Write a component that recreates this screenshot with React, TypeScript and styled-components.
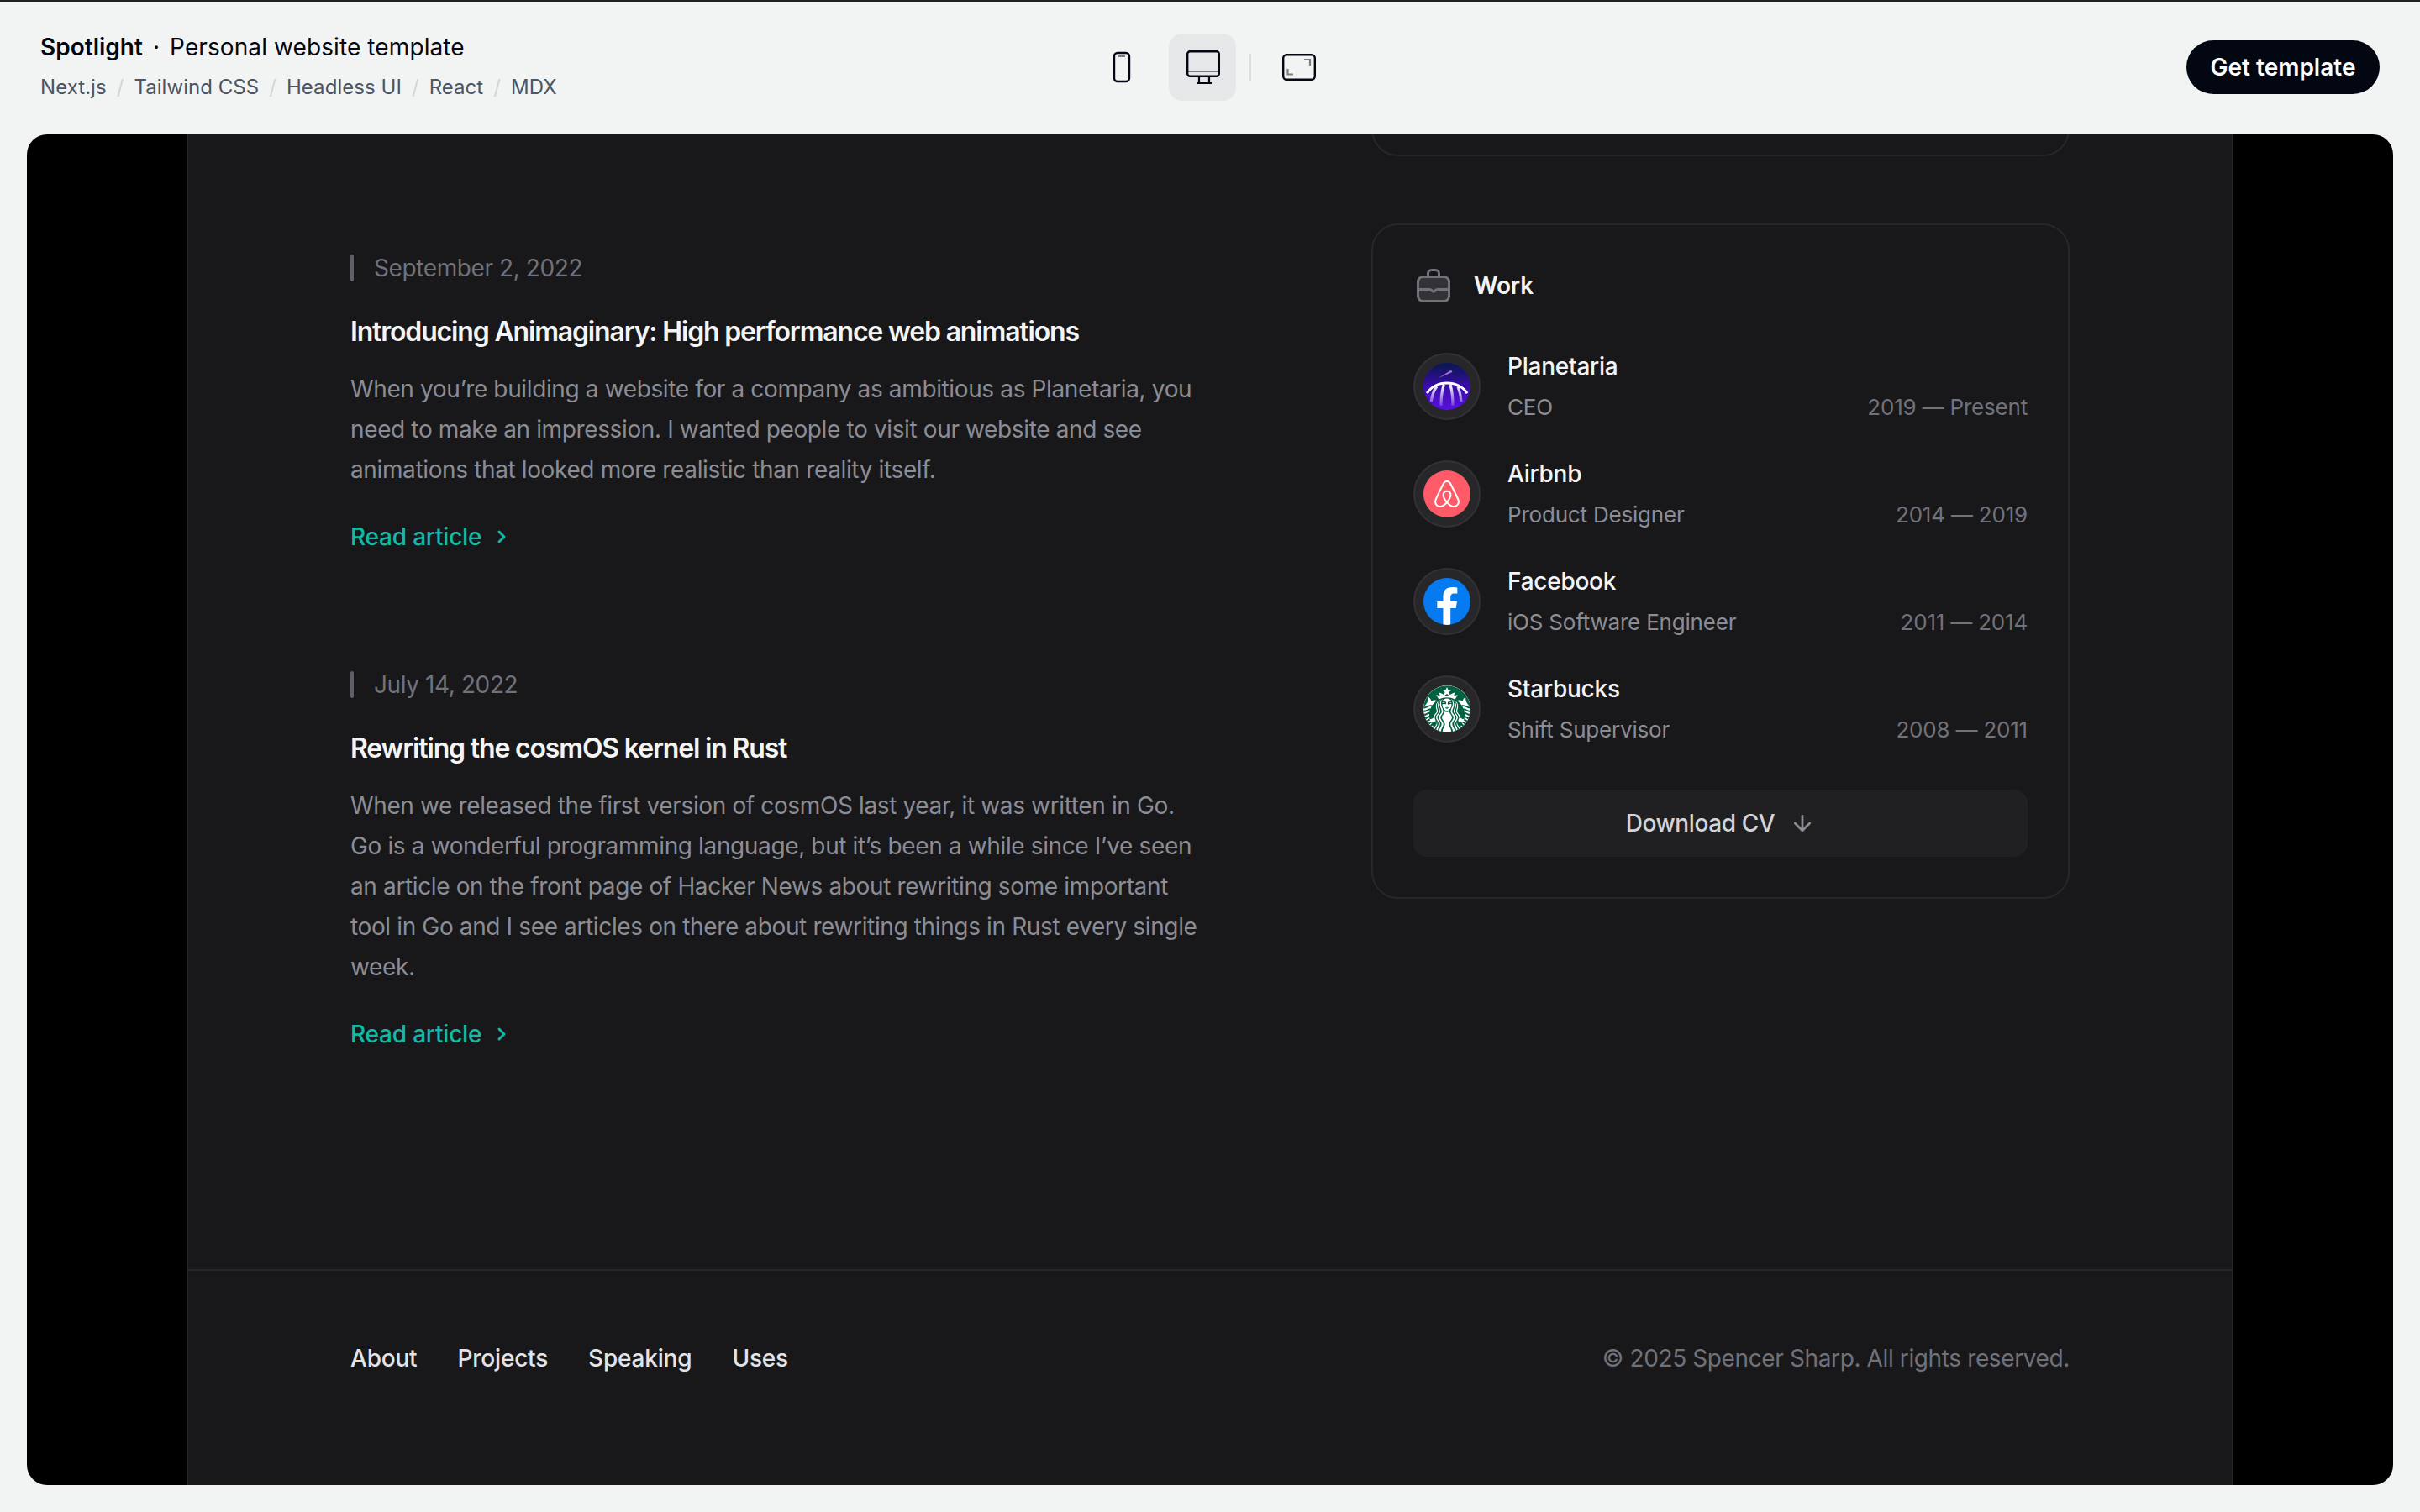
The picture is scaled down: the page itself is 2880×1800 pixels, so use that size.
import { Fragment } from 'react';
import styled, { createGlobalStyle } from 'styled-components';
import { SiAirbnb, SiStarbucks } from 'react-icons/si';
import { LuChevronRight, LuArrowDown } from 'react-icons/lu';

const GlobalStyle = createGlobalStyle`
  html, body {
    margin: 0;
    padding: 0;
    background: #f2f4f3;
    font-family: Inter, "Liberation Sans", sans-serif;
  }
  * { box-sizing: border-box; }
`;

const Page = styled.div`
  width: 2880px;
  height: 1800px;
  border-top: 2px solid #1f2328;
  display: flex;
  flex-direction: column;
  padding: 0 32px 32px;
  overflow: hidden;
`;

const TopBar = styled.header`
  height: 158px;
  flex: none;
  display: grid;
  grid-template-columns: 1fr auto 1fr;
  align-items: center;
  padding: 0 16px 2px;
`;

const Brand = styled.div`
  display: flex;
  flex-direction: column;
  gap: 10px;
  margin-top: -2px;
`;

const BrandTitle = styled.div`
  font-size: 28px;
  line-height: 40px;
  letter-spacing: 0.1px;
  color: #030712;
  display: flex;
  align-items: center;
  gap: 12px;
  strong { font-weight: 600; letter-spacing: 0; }
`;

const Crumbs = styled.div`
  font-size: 24px;
  letter-spacing: 0.05px;
  line-height: 36px;
  color: #4b5563;
  display: flex;
  gap: 12px;
  span { color: #d1d5db; }
`;

const DeviceTabs = styled.div`
  display: flex;
  align-items: center;
  justify-content: center;
  gap: 16px;
`;

const DeviceTab = styled.div<{ $active?: boolean }>`
  width: 80px;
  height: 80px;
  border-radius: 16px;
  display: flex;
  align-items: center;
  justify-content: center;
  background: ${props => (props.$active ? '#e5e7e9' : 'transparent')};
`;

const TabDivider = styled.div`
  width: 2px;
  height: 32px;
  background: #dcdedf;
`;

const GetTemplate = styled.a`
  justify-self: end;
  height: 64px;
  width: 230px;
  border-radius: 32px;
  background: #030712;
  color: #fff;
  font-size: 28px;
  font-weight: 600;
  display: flex;
  align-items: center;
  justify-content: center;
`;

const Frame = styled.main`
  flex: 1;
  background: #000;
  border-radius: 24px;
  overflow: hidden;
  display: flex;
  justify-content: center;
`;

const Sheet = styled.div`
  width: 2436px;
  background: #18181b;
  border-left: 2px solid #27272a;
  border-right: 2px solid #27272a;
  display: flex;
  flex-direction: column;
`;

const Body = styled.div`
  flex: 1;
  padding: 0 193px;
`;

const ClippedCard = styled.div`
  margin: -76px 0 0 auto;
  width: 831px;
  height: 102px;
  border: 2px solid #27272a;
  border-radius: 32px;
`;

const Columns = styled.div`
  display: grid;
  grid-template-columns: 1023px 1fr;
  margin-top: 30px;
`;

const Articles = styled.div`
  display: flex;
  flex-direction: column;
`;

const Article = styled.article`
  height: 496px;
  padding-top: 83px;
`;

const DateLine = styled.time`
  display: flex;
  align-items: center;
  height: 40px;
  padding-left: 28px;
  position: relative;
  font-size: 28px;
  letter-spacing: -0.4px;
  color: #71717a;
  &::before {
    content: '';
    position: absolute;
    left: 0;
    top: 4px;
    width: 4px;
    height: 32px;
    border-radius: 2px;
    background: #5f5f68;
  }
`;

const ArticleTitle = styled.h2`
  margin: 36px 0 0;
  font-size: 32px;
  line-height: 40px;
  font-weight: 600;
  letter-spacing: -1.17px;
  color: #f4f4f5;
`;

const Excerpt = styled.p`
  margin: 24px 0 0;
  max-width: 1016px;
  font-size: 28px;
  line-height: 48px;
  letter-spacing: -0.37px;
  color: #a1a1aa;
  opacity: 0.85;
`;

const ReadLink = styled.a`
  display: flex;
  align-items: center;
  gap: 12px;
  margin-top: 36px;
  height: 40px;
  font-size: 28px;
  font-weight: 500;
  letter-spacing: -0.2px;
  color: #14b8a6;
`;

const WorkCard = styled.aside`
  margin-left: auto;
  width: 831px;
  height: 804px;
  border: 2px solid #27272a;
  border-radius: 32px;
  padding: 48px;
  margin-top: 50px;
`;

const WorkHeading = styled.h2`
  display: flex;
  align-items: center;
  gap: 24px;
  margin: 0;
  height: 48px;
  font-size: 28px;
  font-weight: 600;
  letter-spacing: -0.2px;
  color: #f4f4f5;
`;

const Roles = styled.ol`
  list-style: none;
  padding: 0;
  margin: 48px 0 0;
  display: flex;
  flex-direction: column;
  gap: 32px;
`;

const Role = styled.li`
  display: flex;
  gap: 32px;
`;

const LogoRing = styled.div`
  width: 80px;
  height: 80px;
  margin-top: 8px;
  flex: none;
  border-radius: 50%;
  background: #27272a;
  border: 2px solid #323235;
  display: flex;
  align-items: center;
  justify-content: center;
`;

const LogoDisc = styled.div<{ $bg: string }>`
  width: 56px;
  height: 56px;
  border-radius: 50%;
  overflow: hidden;
  background: ${props => props.$bg};
  display: flex;
  align-items: center;
  justify-content: center;
`;

const RoleInfo = styled.div`
  flex: 1;
  display: grid;
  grid-template-columns: 1fr auto;
  grid-auto-rows: 48px;
  align-items: center;
`;

const Company = styled.div`
  grid-column: 1 / 3;
  font-size: 28px;
  font-weight: 500;
  letter-spacing: -0.25px;
  color: #f4f4f5;
`;

const Position = styled.div`
  font-size: 26px;
  letter-spacing: -0.2px;
  color: #a1a1aa;
  opacity: 0.85;
`;

const Period = styled.div`
  font-size: 26px;
  letter-spacing: -0.2px;
  color: #71717a;
`;

const DownloadButton = styled.a`
  margin-top: 48px;
  height: 80px;
  border-radius: 16px;
  background: #202023;
  color: #d4d4d8;
  font-size: 28px;
  font-weight: 500;
  letter-spacing: -0.4px;
  display: flex;
  align-items: center;
  justify-content: center;
  gap: 18px;
  svg { color: #8c8c94; }
`;

const Footer = styled.footer`
  flex: none;
  height: 257px;
  border-top: 2px solid #27272a;
  padding: 80px 193px 0;
  display: flex;
  justify-content: space-between;
  font-size: 28px;
  line-height: 48px;
`;

const FooterLinks = styled.nav`
  display: flex;
  gap: 48px;
  font-weight: 500;
  letter-spacing: -0.2px;
  color: #e4e4e7;
`;

const Copyright = styled.div`
  letter-spacing: -0.38px;
  color: #71717a;
`;

const IconPhone = () => (
  <svg width="40" height="48" viewBox="0 0 40 48" fill="none">
    <rect x="11" y="7" width="18" height="34" rx="4" stroke="#030712" strokeWidth="2.4" />
    <path d="M16 11h8" stroke="#030712" strokeOpacity="0.5" strokeWidth="2" />
  </svg>
);

const IconDesktop = () => (
  <svg width="44" height="44" viewBox="0 0 44 44" fill="none">
    <rect x="4.200" y="3.200" width="37.600" height="29.600" rx="3" stroke="#030712" strokeWidth="2.4" />
    <path d="M4 27h38" stroke="#030712" strokeOpacity="0.5" strokeWidth="2.2" />
    <path d="M18 33v8M30 33v8M15 41h18" stroke="#030712" strokeWidth="2.2" />
  </svg>
);

const IconExpand = () => (
  <svg width="44" height="36" viewBox="0 0 44 36" fill="none">
    <rect x="4.200" y="3.200" width="37.600" height="29.600" rx="4" stroke="#030712" strokeWidth="2.4" />
    <path d="M29 9h7v7M16 26.500h-6.500V20" stroke="#030712" strokeOpacity="0.5" strokeWidth="2.200" />
  </svg>
);

const BriefcaseIcon = () => (
  <svg width="48" height="48" viewBox="0 0 24 24" fill="none" strokeWidth="1.5" strokeLinecap="round" strokeLinejoin="round">
    <path d="M2.750 9.750a3 3 0 0 1 3-3h12.500a3 3 0 0 1 3 3v8.500a3 3 0 0 1-3 3H5.750a3 3 0 0 1-3-3v-8.500Z" fill="#71717a" fillOpacity="0.3" stroke="#71717a" />
    <path d="M3 14.250h6.249c.484 0 .952-.002 1.316.319l.777.682a.996.996 0 0 0 1.316 0l.777-.682c.364-.32.832-.319 1.316-.319H21M8.750 6.500V4.750a2 2 0 0 1 2-2h2.500a2 2 0 0 1 2 2V6.500" stroke="#71717a" />
  </svg>
);

const PlanetariaLogo = () => (
  <svg width="56" height="56" viewBox="0 0 56 56">
    <defs>
      <linearGradient id="planetariaSky" x1="0" y1="0" x2="0" y2="1">
        <stop offset="0" stopColor="#06184a" />
        <stop offset="0.5" stopColor="#3a0ca8" />
        <stop offset="1" stopColor="#5a10e0" />
      </linearGradient>
      <linearGradient id="planetariaRib" gradientUnits="userSpaceOnUse" x1="0" y1="26" x2="0" y2="51">
        <stop offset="0" stopColor="#fff" />
        <stop offset="1" stopColor="#fff" stopOpacity="0.2" />
      </linearGradient>
    </defs>
    <rect width="56" height="56" fill="url(#planetariaSky)" />
    <path d="M18 18L33 8.500l1.500 2.500Z" fill="#a66be0" />
    <path d="M4.300 36.300C14 20 42 20 52 36.300" fill="none" stroke="#fff" strokeWidth="3" />
    <g fill="none" stroke="url(#planetariaRib)" strokeWidth="3.200">
      <path d="M16 28C12 33 10 40 9.300 46" />
      <path d="M24.300 26C22 33 21 42 21 50.700" />
      <path d="M32 26C34 33 35 42 35 50.700" />
      <path d="M41 28C43 33 44.500 40 45 46" />
    </g>
  </svg>
);

const FacebookLogo = () => (
  <svg width="56" height="56" viewBox="0 0 24 24">
    <path fill="#fff" d="M16.600 15.470 17.130 12H13.800V9.750c0-.95.460-1.870 1.960-1.870h1.510V4.930s-1.370-.230-2.690-.230c-2.740 0-4.530 1.660-4.530 4.660V12H7.010v3.470h3.040V24h3.750v-8.530h2.800Z" />
  </svg>
);

const roles = [
  { company: 'Planetaria', title: 'CEO', period: '2019 — Present', bg: '#3a0ca8', logo: <PlanetariaLogo /> },
  { company: 'Airbnb', title: 'Product Designer', period: '2014 — 2019', bg: '#ff5a67', logo: <SiAirbnb size={32} color="#fff" /> },
  { company: 'Facebook', title: 'iOS Software Engineer', period: '2011 — 2014', bg: '#067af0', logo: <FacebookLogo /> },
  { company: 'Starbucks', title: 'Shift Supervisor', period: '2008 — 2011', bg: '#fff', logo: <SiStarbucks size={56} color="#006241" /> },
];

const articles = [
  {
    date: 'September 2, 2022',
    title: 'Introducing Animaginary: High performance web animations',
    text: 'When you’re building a website for a company as ambitious as Planetaria, you need to make an impression. I wanted people to visit our website and see animations that looked more realistic than reality itself.',
  },
  {
    date: 'July 14, 2022',
    title: 'Rewriting the cosmOS kernel in Rust',
    text: 'When we released the first version of cosmOS last year, it was written in Go. Go is a wonderful programming language, but it’s been a while since I’ve seen an article on the front page of Hacker News about rewriting some important tool in Go and I see articles on there about rewriting things in Rust every single week.',
  },
];

const crumbs = ['Next.js', 'Tailwind CSS', 'Headless UI', 'React', 'MDX'];

export default function App() {
  return (
    <>
      <GlobalStyle />
      <Page>
        <TopBar>
          <Brand>
            <BrandTitle>
              <strong>Spotlight</strong>
              <div>·</div>
              <div>Personal website template</div>
            </BrandTitle>
            <Crumbs>
              {crumbs.map((c, i) => (
                <Fragment key={c}>
                  {i > 0 && <span>/</span>}
                  {c}
                </Fragment>
              ))}
            </Crumbs>
          </Brand>
          <DeviceTabs>
            <DeviceTab><IconPhone /></DeviceTab>
            <DeviceTab $active><IconDesktop /></DeviceTab>
            <TabDivider />
            <DeviceTab><IconExpand /></DeviceTab>
          </DeviceTabs>
          <GetTemplate>Get template</GetTemplate>
        </TopBar>
        <Frame>
          <Sheet>
            <Body>
              <ClippedCard />
              <Columns>
                <Articles>
                  {articles.map(a => (
                    <Article key={a.title}>
                      <DateLine>{a.date}</DateLine>
                      <ArticleTitle>{a.title}</ArticleTitle>
                      <Excerpt>{a.text}</Excerpt>
                      <ReadLink>
                        Read article
                        <LuChevronRight size={24} strokeWidth={3} />
                      </ReadLink>
                    </Article>
                  ))}
                </Articles>
                <WorkCard>
                  <WorkHeading>
                    <BriefcaseIcon />
                    Work
                  </WorkHeading>
                  <Roles>
                    {roles.map(r => (
                      <Role key={r.company}>
                        <LogoRing>
                          <LogoDisc $bg={r.bg}>{r.logo}</LogoDisc>
                        </LogoRing>
                        <RoleInfo>
                          <Company>{r.company}</Company>
                          <Position>{r.title}</Position>
                          <Period>{r.period}</Period>
                        </RoleInfo>
                      </Role>
                    ))}
                  </Roles>
                  <DownloadButton>
                    Download CV
                    <LuArrowDown size={30} strokeWidth={2.2} />
                  </DownloadButton>
                </WorkCard>
              </Columns>
            </Body>
            <Footer>
              <FooterLinks>
                <span>About</span>
                <span>Projects</span>
                <span>Speaking</span>
                <span>Uses</span>
              </FooterLinks>
              <Copyright>© 2025 Spencer Sharp. All rights reserved.</Copyright>
            </Footer>
          </Sheet>
        </Frame>
      </Page>
    </>
  );
}
